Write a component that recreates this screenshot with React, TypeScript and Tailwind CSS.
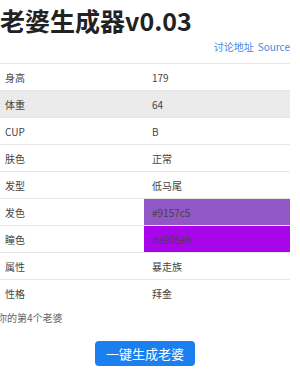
const rows: { label: string; value: string; bg?: string }[] = [
  { label: '身高', value: '179' },
  { label: '体重', value: '64', bg: 'gray' },
  { label: 'CUP', value: 'B' },
  { label: '肤色', value: '正常' },
  { label: '发型', value: '低马尾' },
  { label: '发色', value: '#9157c5', bg: 'hair' },
  { label: '瞳色', value: '#a905eb', bg: 'eye' },
  { label: '属性', value: '暴走族' },
  { label: '性格', value: '拜金' },
]

function Row({ label, value, bg }: { label: string; value: string; bg?: string }) {
  const rowBg = bg === 'gray' ? 'bg-[#ebebeb]' : 'bg-white'
  const cellBg = bg === 'hair' ? 'bg-[#9157c5]' : bg === 'eye' ? 'bg-[#a905eb]' : ''
  return (
    <div className={`grid grid-cols-[144px_146px] h-[27px] border-t border-[#e8e8e8] ${rowBg}`}>
      <div className="flex items-center pl-[5px] text-[#444]">{label}</div>
      <div className={`flex items-center pl-[8px] text-[#444] ${cellBg}`}>{value}</div>
    </div>
  )
}

export default function App() {
  return (
    <div
      className="w-[300px] h-[376px] bg-white overflow-hidden"
      style={{ fontFamily: '"Noto Sans CJK SC", "Noto Sans", sans-serif' }}
    >
      <div className="w-[290px]">
        <h1 className="h-[40px] leading-[40px] text-[25px] font-bold text-[#222] whitespace-nowrap">
          老婆生成器v0.03
        </h1>
        <div className="flex justify-end h-[12px] leading-[12px] text-[10px] text-[#3d8be0] mt-[1px]">
          <span>讨论地址</span>
          <span className="ml-[4px]">Source</span>
        </div>

        {/* Table */}
        <div className="mt-[10px] text-[10px]">
          {rows.map((r) => (
            <Row key={r.label} {...r} />
          ))}
        </div>

        <p className="ml-[-3px] mt-[5px] text-[10px] leading-[14px] text-[#666]">你的第4个老婆</p>

        <div className="flex justify-center mt-[16px]">
          <button className="w-[100px] h-[25px] rounded-[4px] bg-[#1b7ff0] text-white text-[13px] leading-[25px]">
            一键生成老婆
          </button>
        </div>
      </div>
    </div>
  )
}
